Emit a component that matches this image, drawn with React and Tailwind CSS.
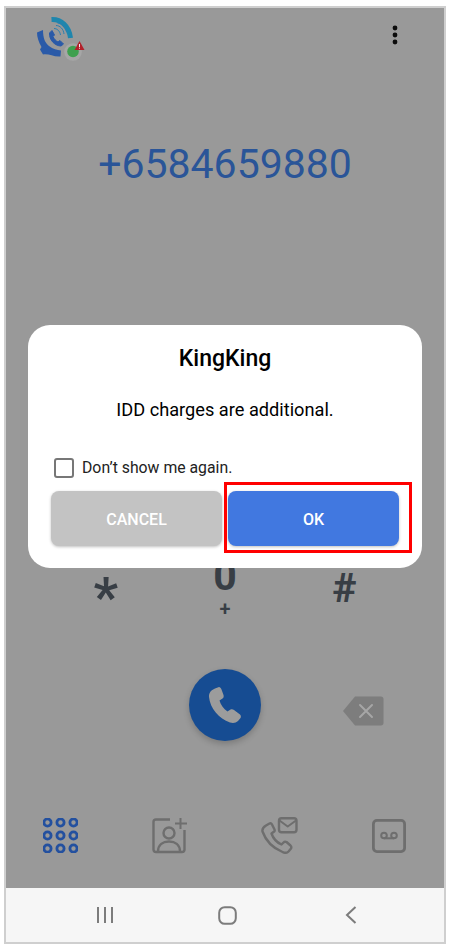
const roboto = { fontFamily: 'Roboto, "Liberation Sans", sans-serif' };

function Logo() {
  return (
    <svg width="50" height="46" viewBox="0 0 50 46" className="block">
      <path d="M15.5 3.5 C25 3 33 10 34.5 22" fill="none" stroke="#1f86ad" strokeWidth="5" />
      <path d="M1 16.5 L7 14 C7 22 9 27 13 30 C17 33 21 34 25 34.5 L24.5 40.5 C17 41 13 37.5 7 38.5 L4 33.5 L5.5 31 C2.5 26 1 21 1 16.5 Z" fill="#2a5aa8" />
      <path d="M13.5 17 L16 14.5 L18.5 19 L17 20.5 C18 23 20 25 22 26 L24 24.5 L27.5 28 L25 30 C19 30 13 24 13.5 17 Z" fill="#2a5aa8" stroke="#2a5aa8" strokeWidth="1" />
      <path d="M18 12.5 C21 12.5 24 15 24.5 19 M20 9.5 C24 9.5 27.5 13 28 18 M21.5 7 C26 7 30 11 30.5 16" fill="none" stroke="#2a7fb0" strokeWidth="1" />
      <circle cx="37" cy="36" r="8.8" fill="#a6a6a6" />
      <circle cx="37" cy="35.5" r="5.8" fill="#3fa04f" />
      <path d="M43.5 25 L48.5 34 L38.5 34 Z" fill="#b3202a" />
      <rect x="43" y="28" width="1" height="3" fill="#eee" />
      <rect x="43" y="31.7" width="1" height="1" fill="#eee" />
    </svg>
  );
}

function Kebab() {
  return (
    <svg width="6" height="20" viewBox="0 0 6 20" className="block">
      <circle cx="3" cy="3" r="2.4" fill="#0c0c0c" />
      <circle cx="3" cy="10" r="2.4" fill="#0c0c0c" />
      <circle cx="3" cy="17" r="2.4" fill="#0c0c0c" />
    </svg>
  );
}

function Handset() {
  return (
    <svg width="36" height="38" viewBox="0 0 36 38" className="block">
      <path d="M8 2.5 L12 1 C13 1 14 2 14.5 3.5 L16.5 9 C17 10.5 16.5 12 15.5 12.5 L12.5 14.5 C13.5 18.5 16.5 23 20.5 25.5 L23.5 23.5 C24.5 23 26 23 27 24 L33 28.5 C34 29.5 34.2 31 33.5 32 L31 35 C29 37 26 37.5 23 36.5 C12 33 3 22 2 11 C1.7 7 4 4 8 2.5 Z" fill="#9c9c9c" />
    </svg>
  );
}

function Backspace() {
  return (
    <svg width="42" height="30" viewBox="0 0 42 30" className="block">
      <path d="M13 0.5 H39 C40.5 0.5 41.5 1.5 41.5 3 V27 C41.5 28.5 40.5 29.5 39 29.5 H13 L1 15 Z" fill="#7d7d7d" />
      <path d="M18 9 L30 21 M30 9 L18 21" stroke="#a6a6a6" strokeWidth="2" strokeLinecap="round" />
    </svg>
  );
}

function DialIcon() {
  const pts = [4.5, 17.5, 30.5];
  return (
    <svg width="35" height="35" viewBox="0 0 35 35" className="block">
      {pts.map((y) =>
        pts.map((x) => (
          <circle key={`${x}-${y}`} cx={x} cy={y} r="3.6" fill="none" stroke="#23509f" strokeWidth="2.8" />
        ))
      )}
    </svg>
  );
}

function ContactIcon() {
  return (
    <svg width="36" height="37" viewBox="0 0 36 37" fill="none" stroke="#6e6e6e" strokeWidth="2.4" className="block">
      <path d="M18 2.5 H4 C2.5 2.5 1.5 3.5 1.5 5 V32.5 C1.5 34 2.5 35 4 35 H30 C31.5 35 32.5 34 32.5 32.5 V13" />
      <circle cx="17" cy="16" r="5.5" />
      <path d="M6 34.5 C6 27.5 11 24.5 17 24.5 C23 24.5 28 27.5 28 34.5" />
      <path d="M28.5 1 V12 M23 6.5 H35" strokeWidth="2" />
    </svg>
  );
}

function CallMailIcon() {
  return (
    <svg width="37" height="37" viewBox="0 0 37 37" fill="none" stroke="#6e6e6e" strokeWidth="2.4" strokeLinejoin="round" className="block">
      <path d="M5 8.5 L8.5 6.5 C9.5 6 10.5 6.5 11 7.5 L13.5 12.5 C14 13.5 13.5 14.5 12.5 15 L10.5 16.5 C12 21 16 25.5 20.5 27.5 L22.5 25.5 C23.5 24.5 24.5 24.5 25.5 25 L29.5 28.5 C30.5 29.5 30.5 30.5 30 31.5 L27.5 34.5 C26 36 23.5 36 21.5 35 C12 31 4.5 23 1.5 14.5 C1 12 2.5 10 5 8.5 Z" />
      <rect x="18" y="1.2" width="17.5" height="14" rx="2.5" />
      <path d="M18.5 3.5 L26.7 9.5 L35 3.5" strokeWidth="2" />
    </svg>
  );
}

function VoicemailIcon() {
  return (
    <svg width="34" height="34" viewBox="0 0 34 34" fill="none" stroke="#6e6e6e" className="block">
      <rect x="1.4" y="1.4" width="31.2" height="31.2" rx="3.5" strokeWidth="2.8" />
      <circle cx="12" cy="16.5" r="2.8" strokeWidth="2" />
      <circle cx="22" cy="16.5" r="2.8" strokeWidth="2" />
      <path d="M12 19.3 H22" strokeWidth="2" />
    </svg>
  );
}

export default function App() {
  return (
    <div className="w-[450px] h-[949px] bg-white pt-[6px] px-[4px]" style={roboto}>
      <div className="relative w-[442px] h-[938px] border-2 border-[#cfcfcf] flex flex-col">
        <div className="flex-1 bg-[#999999] flex flex-col">
          <div className="flex justify-between items-start pl-[30px] pr-[46px] pt-[8px] h-[52px]">
            <Logo />
            <div className="pt-[9px]">
              <Kebab />
            </div>
          </div>
          <div className="mt-[80px] text-center text-[41px] leading-[48px] text-[#2a5598]">+6584659880</div>
          <div className="mt-[377px] grid grid-cols-3 px-[40px] h-[70px] text-[#383e45] font-bold">
            <div className="flex justify-center pt-[2px] text-[54px] leading-[60px]">*</div>
            <div className="flex flex-col items-center -mt-[13px]">
              <span className="text-[41px] leading-[48px]">0</span>
              <span className="text-[20px] leading-[20px] -mt-[1px] font-semibold">+</span>
            </div>
            <div className="flex justify-center -mt-[1px] text-[41px] leading-[48px]">#</div>
          </div>
          <div className="mt-[34px] grid grid-cols-3 px-[40px] items-center">
            <div />
            <div className="flex justify-center">
              <div className="w-[72px] h-[72px] rounded-full bg-[#164c92] flex items-center justify-center shadow-[0_3px_6px_rgba(0,0,0,0.2)]">
                <Handset />
              </div>
            </div>
            <div className="flex justify-center pt-[12px] pl-[38px]">
              <Backspace />
            </div>
          </div>
          <div className="mt-[76px] grid grid-cols-4 items-center justify-items-center">
            <DialIcon />
            <ContactIcon />
            <CallMailIcon />
            <VoicemailIcon />
          </div>
        </div>
        <div className="h-[54px] bg-[#f6f6f6] grid grid-cols-3 pl-[38px] pr-[32px] items-center justify-items-center">
          <svg width="18" height="18" viewBox="0 0 18 18" stroke="#7c7c7c" strokeWidth="2" className="block">
            <path d="M2 1 V17 M9 1 V17 M16 1 V17" />
          </svg>
          <svg width="19" height="19" viewBox="0 0 19 19" fill="none" stroke="#7c7c7c" strokeWidth="2" className="block">
            <rect x="1.2" y="1.2" width="16.6" height="16.6" rx="5.5" />
          </svg>
          <svg width="12" height="18" viewBox="0 0 12 18" fill="none" stroke="#7c7c7c" strokeWidth="2" className="block">
            <path d="M10.5 1 L2 9 L10.5 17" />
          </svg>
        </div>

        <div className="absolute left-[22px] top-[317px] w-[394px] h-[243px] bg-white rounded-[22px] px-[23px] flex flex-col text-black">
          <div className="mt-[20px] text-center text-[23px] leading-[28px] font-medium">KingKing</div>
          <div className="mt-[25px] text-center text-[18.2px] leading-[24px]">IDD charges are additional.</div>
          <div className="mt-[36px] flex items-center gap-[8px] pl-[3px]">
            <div className="w-[20px] h-[20px] rounded-[3px] border-2 border-[#777777] bg-white" />
            <span className="text-[15.8px] leading-[20px] text-[#222222]">Don’t show me again.</span>
          </div>
          <div className="mt-[13px] grid grid-cols-2 gap-[6px]">
            <div className="h-[55px] pt-[2px] rounded-[8px] bg-[#c3c3c3] text-white text-[16px] font-medium flex items-center justify-center shadow-[0_1px_3px_rgba(0,0,0,0.25)]">CANCEL</div>
            <div className="h-[55px] pt-[2px] rounded-[8px] bg-[#4178e0] text-white text-[16px] font-medium flex items-center justify-center shadow-[0_1px_3px_rgba(0,0,0,0.25)]">OK</div>
          </div>
        </div>
        <div className="absolute left-[218px] top-[474px] w-[188px] h-[71px] border-[3px] border-[#ff0000]" />
      </div>
    </div>
  );
}
